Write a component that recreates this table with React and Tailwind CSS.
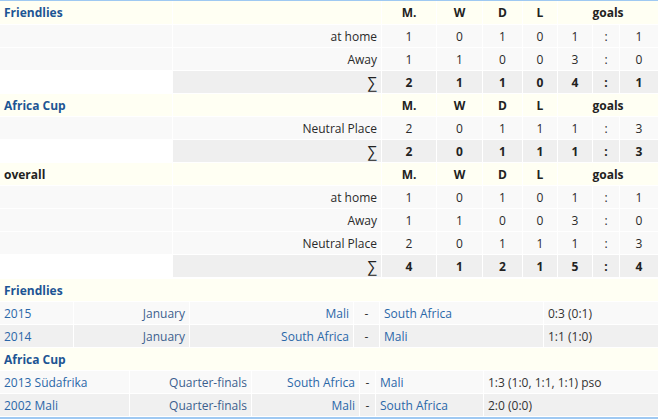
import React from "react";

const T1 = "grid grid-cols-[172px_208px_54px_45px_39px_34px_34px_26px_38px] gap-px";
const LINK = "text-[#2b67a8]";

function Header({ title, link = true, first = false }) {
  return (
    <div className={`${T1} ${first ? "h-[23px]" : "h-[22px]"} bg-white`}>
      <div className={`bg-[#fffff3] flex items-center px-1 pt-px font-bold ${link ? "text-[#1d5594]" : "text-[#222]"}`}>{title}</div>
      <div className="bg-[#fffff3]" />
      <div className="bg-[#fffff3] flex items-center justify-center pt-px font-bold text-[#222]">M.</div>
      <div className="bg-[#fffff3] flex items-center justify-center pt-px font-bold text-[#222]">W</div>
      <div className="bg-[#fffff3] flex items-center justify-center pt-px font-bold text-[#222]">D</div>
      <div className="bg-[#fffff3] flex items-center justify-center pt-px font-bold text-[#222]">L</div>
      <div className="col-span-3 bg-[#fffff3] flex items-center justify-center pt-px font-bold text-[#222]">goals</div>
    </div>
  );
}

function Row({ label, v }) {
  return (
    <div className={`${T1} h-[22px] text-[#2a2a2a]`}>
      <div className="bg-[#f9f9f9]" />
      <div className="bg-[#f9f9f9] flex items-center justify-end px-1 pt-px">{label}</div>
      {v.map((x, i) => (
        <div key={i} className="bg-[#f9f9f9] flex items-center justify-center pt-px">{x}</div>
      ))}
    </div>
  );
}

function Sum({ v }) {
  return (
    <div className={`${T1} h-[22px] text-[#222] font-bold`}>
      <div className="bg-white" />
      <div className="bg-[#efefef] flex items-center justify-end px-1 font-normal text-[15px] leading-none">∑</div>
      {v.map((x, i) => (
        <div key={i} className="bg-[#efefef] flex items-center justify-center pt-px">{x}</div>
      ))}
    </div>
  );
}

const G1 = "grid grid-cols-[73px_115px_163px_25px_163px_114px] gap-px h-[22px]";
const G2 = "grid grid-cols-[129px_121px_107px_15px_107px_174px] gap-px h-[22px]";

function Match({ g, bg, a, b, home, away, res }) {
  return (
    <div className={g}>
      <div className={`${bg} flex items-center px-1 pt-px ${LINK}`}>{a}</div>
      <div className={`${bg} flex items-center justify-end px-1 pt-px text-[#3c5f8e]`}>{b}</div>
      <div className={`${bg} flex items-center justify-end px-1 pt-px ${LINK}`}>{home}</div>
      <div className={`${bg} flex items-center justify-center pt-px text-[#333]`}>-</div>
      <div className={`${bg} flex items-center px-1 pt-px ${LINK}`}>{away}</div>
      <div className={`${bg} flex items-center px-1 pt-px text-[#333]`}>{res}</div>
    </div>
  );
}

function SecHead({ title }) {
  return (
    <div className="h-[22px] bg-[#fffff3] flex items-center px-1 pt-px font-bold text-[#1d5594]">{title}</div>
  );
}

export default function App() {
  return (
    <div
      className="w-[658px] h-[420px] bg-white text-[12px] border-t border-[#9fc9f2]"
      style={{ fontFamily: '"Open Sans", sans-serif' }}
    >
      <div className="flex flex-col gap-px">
        <Header title="Friendlies" first />
        <Row label="at home" v={[1, 0, 1, 0, 1, ":", 1]} />
        <Row label="Away" v={[1, 1, 0, 0, 3, ":", 0]} />
        <Sum v={[2, 1, 1, 0, 4, ":", 1]} />
        <Header title="Africa Cup" />
        <Row label="Neutral Place" v={[2, 0, 1, 1, 1, ":", 3]} />
        <Sum v={[2, 0, 1, 1, 1, ":", 3]} />
        <Header title="overall" link={false} />
        <Row label="at home" v={[1, 0, 1, 0, 1, ":", 1]} />
        <Row label="Away" v={[1, 1, 0, 0, 3, ":", 0]} />
        <Row label="Neutral Place" v={[2, 0, 1, 1, 1, ":", 3]} />
        <Sum v={[4, 1, 2, 1, 5, ":", 4]} />
      </div>
      <div className="mt-[2px] flex flex-col gap-px border-b-2 border-[#9fc9f2] pb-px">
        <SecHead title="Friendlies" />
        <Match g={G1} bg="bg-[#f9f9f9]" a="2015" b="January" home="Mali" away="South Africa" res="0:3 (0:1)" />
        <Match g={G1} bg="bg-[#f0f0f0]" a="2014" b="January" home="South Africa" away="Mali" res="1:1 (1:0)" />
        <SecHead title="Africa Cup" />
        <Match g={G2} bg="bg-[#f9f9f9]" a="2013 Südafrika" b="Quarter-finals" home="South Africa" away="Mali" res="1:3 (1:0, 1:1, 1:1) pso" />
        <Match g={G2} bg="bg-[#f0f0f0]" a="2002 Mali" b="Quarter-finals" home="Mali" away="South Africa" res="2:0 (0:0)" />
      </div>
    </div>
  );
}
